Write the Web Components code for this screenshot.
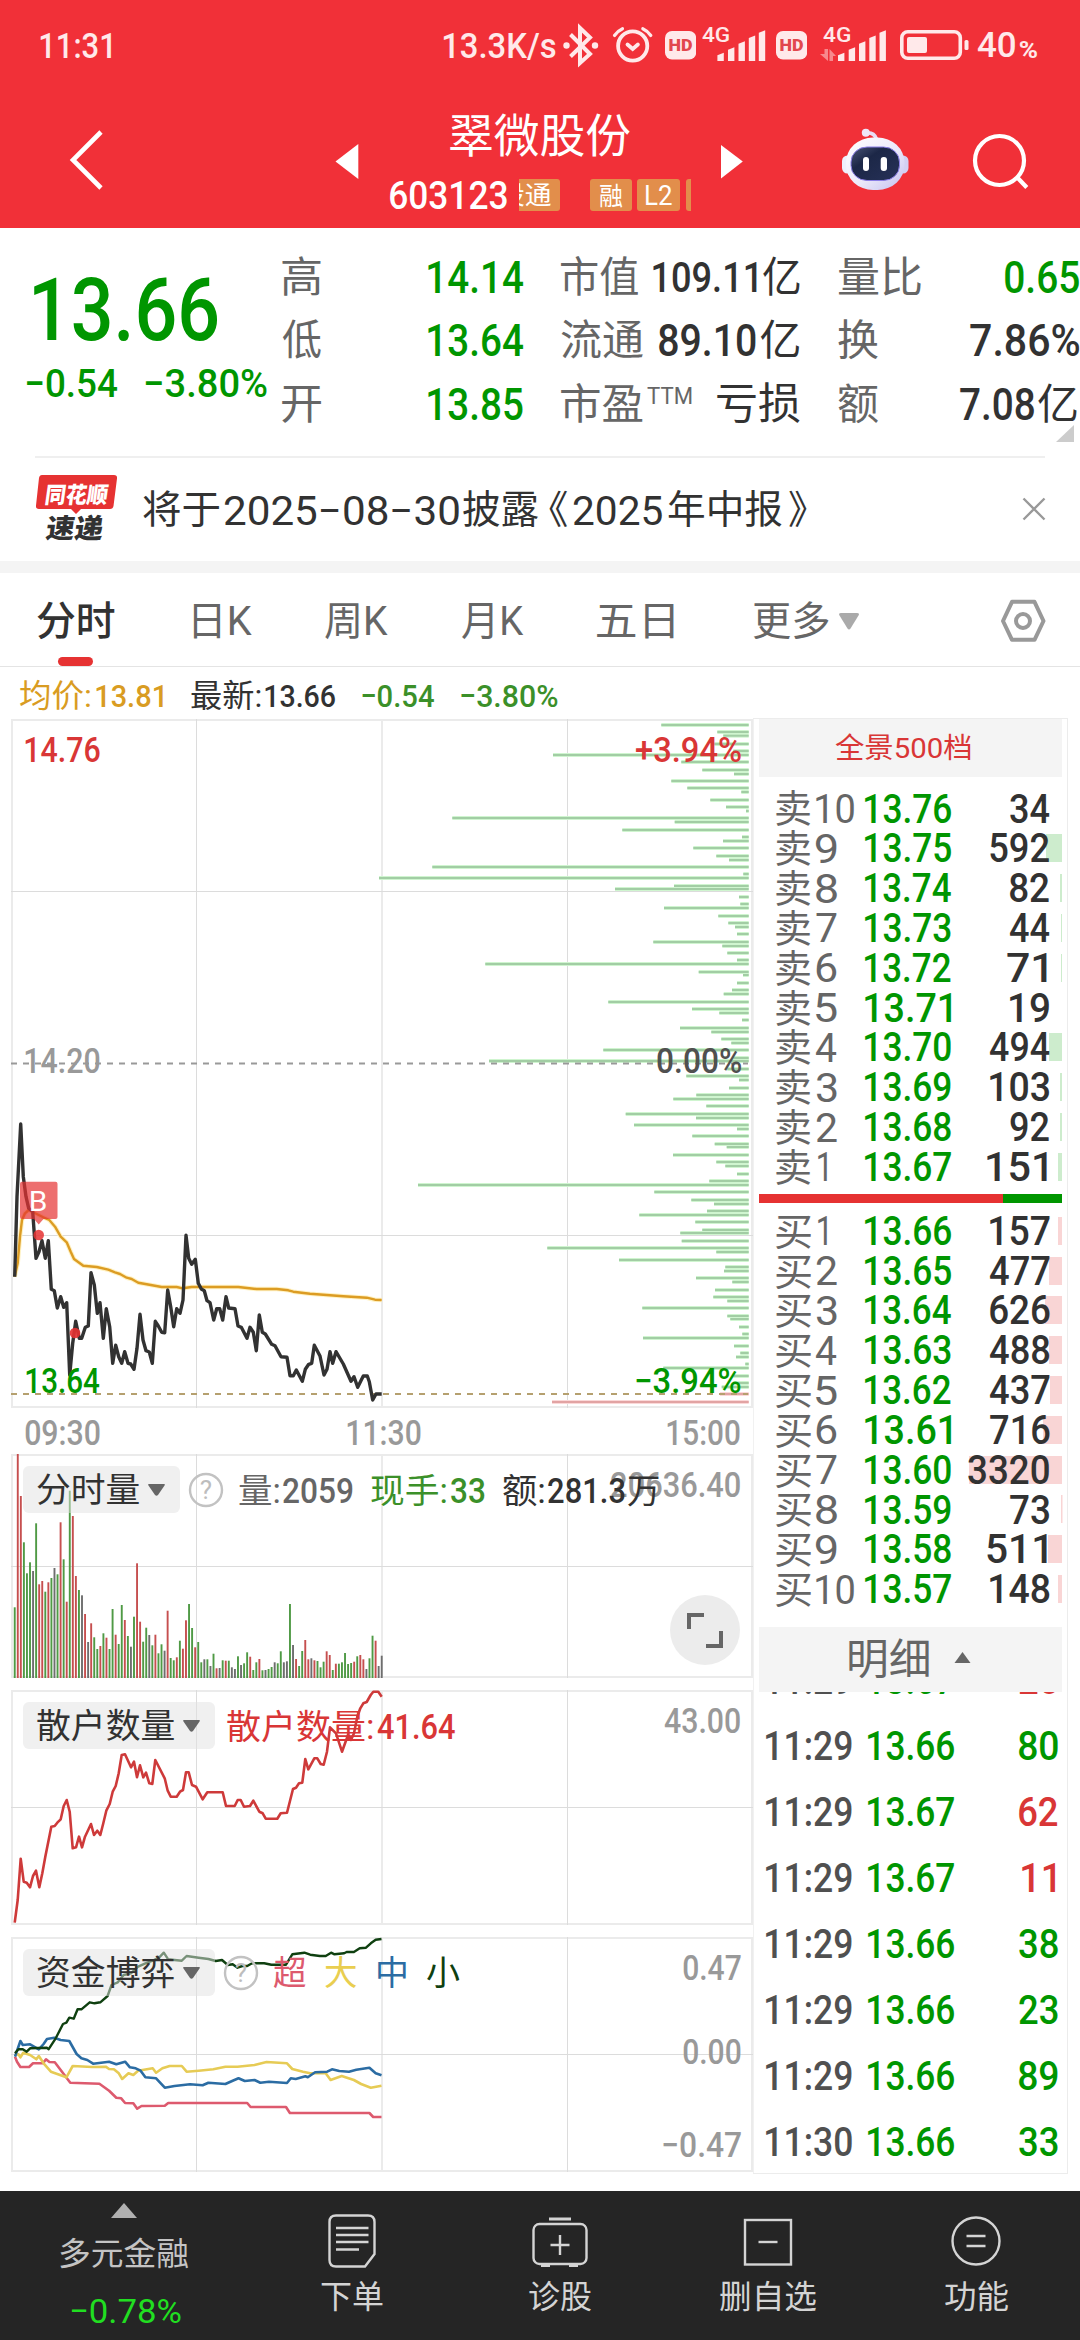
<!DOCTYPE html>
<html lang="zh-CN">
<head>
<meta charset="utf-8">
<title>翠微股份 603123</title>
<style>
html,body{margin:0;padding:0;background:#fff}
body{width:1080px;height:2340px;overflow:hidden;font-family:Roboto,"Noto Sans CJK SC",sans-serif}
</style>
</head>
<body>
<stock-app></stock-app>
<script>
const FONT = 'Roboto, "Noto Sans CJK SC", sans-serif';
const GREEN = '#009600', RED = '#d93636', DARK = '#323232', GRAY = '#666', LIGHT = '#999';
const ctx = document.createElement('canvas').getContext('2d');

/* Text run whose ink is fitted to an exact width. */
class FitText extends HTMLElement {
  connectedCallback() {
    if (this.shadowRoot) return;
    const w = +this.getAttribute('w'), s = +this.getAttribute('s'), b = this.getAttribute('b') || 400;
    const c = this.getAttribute('c') || 'inherit', y = (+this.getAttribute('y') || 0) + .8;
    ctx.font = `${b} ${s}px ${FONT}`;
    const m = ctx.measureText(this.textContent);
    const k = w / (m.actualBoundingBoxLeft + m.actualBoundingBoxRight);
    this.attachShadow({ mode: 'open' }).innerHTML = `<style>
      :host{display:block;width:${w}px;height:${s}px;flex:none}
      span{display:inline-block;vertical-align:top;white-space:pre;transform-origin:0 50%;font:${b} ${s}px/${s}px ${FONT};color:${c};
        transform:translate(${m.actualBoundingBoxLeft * k}px,${y}px) scaleX(${k})}
      </style><span><slot></slot></span>`;
  }
}
customElements.define('fit-text', FitText);

const F = (x, r, s, c, t, b = 400, y = 0) => ({ x, r, h: `<fit-text w="${r - x}" s="${s}" c="${c}" b="${b}" y="${y}">${t}</fit-text>` });
const I = (x, r, y, hh, inner) => ({ x, r, h: `<svg width="${r - x}" height="${hh}" viewBox="${x} ${y} ${r - x} ${hh}">${inner}</svg>` });
const row = (items, from = 0) => {
  let p = from;
  return items.map(i => { const m = i.x - p; p = i.r; return `<div class="i" style="margin-left:${m.toFixed(2)}px;width:${(i.r - i.x).toFixed(2)}px">${i.h}</div>`; }).join('');
};
const BASE = `:host{display:block}*{box-sizing:border-box}svg{display:block}.row{display:flex;align-items:center}.i{flex:none}`;
const define = (name, css, html) => customElements.define(name, class extends HTMLElement {
  connectedCallback() {
    if (this.shadowRoot) return;
    this.attachShadow({ mode: 'open' }).innerHTML = `<style>${BASE}${css}</style>${typeof html === 'function' ? html(this) : html}`;
  }
});

/* ---------- status bar ---------- */
const SW = '#ffe9ea';
const bars = xs => xs.map((x, i) => { const t = [53.3, 47.7, 41.7, 36, 30.7][i]; return `<path fill="${SW}" d="M${x} 61V${t + 2}L${x + 6.4} ${t - .5}V61z"/>`; }).join('');
const hd = x => I(x, x + 31.2, 0, 91, `<rect x="${x}" y="31" width="31.2" height="28.5" rx="7" fill="${SW}"/><text x="${x + 15.6}" y="51.2" text-anchor="middle" font-family="Roboto" font-weight="900" font-size="17" textLength="24" lengthAdjust="spacingAndGlyphs" fill="#e2474d">HD</text>`);
define('status-bar', `.row{height:91px}`, `<div class="row">${row([
  F(39.6, 111, 35.5, SW, '11:31', 500),
  F(443, 555.5, 35.5, SW, '13.3K/s', 500),
  I(562, 600, 0, 91, `<path d="M570.5 34.5L590 54L580 63V28L590 37.5L570.5 56.5" fill="none" stroke="${SW}" stroke-width="4"/><circle cx="566.5" cy="45.5" r="3.2" fill="${SW}"/><circle cx="595" cy="45.5" r="3.2" fill="${SW}"/>`),
  I(612, 654, 0, 91, `<g fill="none" stroke="${SW}" stroke-width="3.8" stroke-linecap="round"><circle cx="632.7" cy="46" r="14.6"/><path d="M627.5 44.5l5.2 4.5 5.2-4.5"/><path stroke-width="3.2" d="M614.5 35.5q3-4.500 8-6.800M650.800 35.500q-3-4.500-8-6.800"/></g>`),
  hd(664.7),
  F(702, 729.5, 20, SW, '4G', 500, -12),
  I(717, 766, 0, 91, bars([717.4, 728, 738.5, 748.8, 758.8])),
  hd(776.3),
  I(820, 836, 0, 91, `<g fill="#f7898d"><path d="M824.500 49h3.500v12l-8-7h4.500zM829.500 61v-12l6.500 7h-3v5z"/></g>`),
  F(822.8, 850.4, 20, SW, '4G', 500, -12),
  I(838, 887, 0, 91, bars([838, 848.700, 859, 869.300, 879.500])),
  I(899, 969, 0, 91, `<rect x="901.800" y="31.800" width="58.500" height="26.500" rx="6" fill="none" stroke="${SW}" stroke-width="3.600"/><rect x="907" y="37" width="20" height="16" rx="2" fill="${SW}"/><rect x="964.500" y="40" width="4" height="10" rx="1.500" fill="${SW}"/>`),
  F(977.5, 1016, 35.5, SW, '40', 500, -.5),
  F(1020, 1037, 23, SW, '%', 700, 4)
])}</div>`);

/* ---------- title header ---------- */
define('stock-header', `
  .row{height:137px;align-items:stretch}
  .mid{height:137px;padding-top:18px}
  .t{display:flex;height:52px;align-items:center}
  .c{display:flex;height:32px;align-items:center;margin-top:18px}
  .b{height:32px;background:#e28e4b;border-radius:3px;overflow:hidden;display:flex;align-items:center}
  .clipL{border-radius:0 3px 3px 0}.clipR{border-radius:3px 0 0 3px}`,
  `<div class="row">${row([
    I(66, 106, 91, 137, `<path d="M101 132L73 160L101 188" fill="none" stroke="#fff" stroke-width="4.600"/>`),
    I(335, 359, 91, 137, `<path d="M335.500 161.500L358.300 144V179z" fill="#fff"/>`),
    { x: 389, r: 692, h: `<div class="mid"><div class="t">${row([F(449.5, 629.6, 46, '#fff', '翠微股份')], 389)}</div>
      <div class="c">${row([
        F(389.6, 506.4, 38.5, '#fff', '603123', 500),
        { x: 519, r: 559.6, h: `<div class="b clipL">${row([F(498, 551, 25.5, '#fff', '股通')], 519)}</div>` },
        { x: 590, r: 631.6, h: `<div class="b">${row([F(600, 623, 25, '#fff', '融')], 590)}</div>` },
        { x: 637, r: 680.5, h: `<div class="b">${row([F(645.6, 672, 27, '#fff', 'L2')], 637)}</div>` },
        { x: 686, r: 691, h: `<div class="b clipR"></div>` }
      ], 389)}</div></div>` },
    I(720, 744, 91, 137, `<path d="M721 145V178.500L742.800 161.500z" fill="#fff"/>`),
    I(841, 909, 91, 137, `<defs><linearGradient id="a" x1="0" y1="0" x2="1" y2="1"><stop offset="0" stop-color="#fff"/><stop offset=".55" stop-color="#eceafa"/><stop offset="1" stop-color="#c3bff0"/></linearGradient><linearGradient id="v" x1="0" y1="0" x2="1" y2="1"><stop offset="0" stop-color="#4a5575"/><stop offset=".35" stop-color="#1c2747"/><stop offset="1" stop-color="#263158"/></linearGradient></defs>
      <path d="M866 133q8-1 10.500 6" fill="none" stroke="#e9dcf4" stroke-width="3.600"/><circle cx="865.800" cy="132.800" r="4" fill="#efe6f8"/>
      <rect x="842" y="155.500" width="12" height="18" rx="5.500" fill="#eef0fc"/><rect x="896.500" y="155.500" width="12" height="18" rx="5.500" fill="#d3d0f3"/>
      <rect x="846" y="137.500" width="58.500" height="52.500" rx="27" ry="25" fill="url(#a)"/>
      <rect x="851" y="147" width="48.500" height="33.500" rx="16" ry="15" fill="url(#v)" stroke="#8a7ee6" stroke-width="1"/>
      <rect x="863" y="157" width="6" height="14" rx="3" fill="#fff"/><rect x="880.700" y="157" width="6.300" height="14" rx="3" fill="#fff"/>`),
    I(970, 1030, 91, 137, `<g fill="none" stroke="#fff" stroke-width="4.200"><circle cx="999.500" cy="160.500" r="24.500"/><path d="M1016.800 177L1026.800 187.500"/></g>`)
  ])}</div>`);

/* ---------- quote ---------- */
define('quote-panel', `
  .q{display:flex;height:228px;border-bottom:0}
  .l{width:270px;flex:none;padding-top:38px}
  .big{display:flex;height:86px;align-items:center}
  .chg{display:flex;height:50px;align-items:center;margin-top:6px}
  .g{flex:1;padding-top:17px}
  .g .row{height:63.5px}
  .line{height:2px;margin-left:35px;width:1010px;background:#efefef}
  svg.cor{position:absolute;left:1056px;top:425px}`,
  `<div class="q"><div class="l"><div class="big">${row([F(33.8, 217, 87, GREEN, '13.66', 500)])}</div>
    <div class="chg">${row([F(27, 117.5, 39.5, GREEN, '−0.54', 500), F(146, 267, 39.5, GREEN, '−3.80%', 500)])}</div></div>
   <div class="g">
    <div class="row">${row([F(282, 321, 42, GRAY, '高'), F(428, 523, 44, GREEN, '14.14', 500), F(561, 638.5, 42, GRAY, '市值'), F(653, 757, 43, DARK, '109.11', 500), F(763, 800, 42, DARK, '亿'), F(838, 921, 42, GRAY, '量比'), F(1004.5, 1079, 44, GREEN, '0.65', 500)], 270)}</div>
    <div class="row">${row([F(282, 321, 42, GRAY, '低'), F(428, 523, 44, GREEN, '13.64', 500), F(561, 643, 42, GRAY, '流通'), F(658.5, 755, 44, DARK, '89.10', 500), F(760.5, 799.5, 42, DARK, '亿'), F(838, 878, 42, GRAY, '换'), F(970, 1079.5, 44, DARK, '7.86%', 500)], 270)}</div>
    <div class="row">${row([F(282, 321, 42, GRAY, '开'), F(428, 523, 44, GREEN, '13.85', 500), F(561, 643, 42, GRAY, '市盈'), F(646.5, 691.5, 23, GRAY, 'TTM', 400, -8), F(717, 800, 43, DARK, '亏损'), F(838, 878, 42, GRAY, '额'), F(959.5, 1033.5, 44, DARK, '7.08', 500), F(1038, 1077, 42, DARK, '亿')], 270)}</div>
   </div></div><svg class="cor" width="18" height="17"><path d="M18 0V17H0z" fill="#ccc"/></svg><div class="line"></div>`);

define('news-strip', `.row{height:103px}.band{height:12px;background:#f4f4f4}`, `<div class="row">${row([
  I(34, 119, 458, 103, `<path d="M42 475H114q3.500 0 3 3.500L113.500 506q-.5 3-3.500 3H81l-5 5-5-5H39q-3.500 0-3-3.500L39 478q.5-3 3-3z" fill="#e63232"/>
    <text transform="translate(44 502.500) skewX(-8)" font-family="Noto Sans CJK SC" font-weight="900" font-size="22.500" textLength="63" lengthAdjust="spacingAndGlyphs" fill="#fff">同花顺</text>
    <text transform="translate(45 537.500) skewX(-8)" font-family="Noto Sans CJK SC" font-weight="900" font-size="27" textLength="57" lengthAdjust="spacingAndGlyphs" fill="#323232">速递</text>`),
  F(143, 219, 39, DARK, '将于'), F(223.5, 458, 41.5, DARK, '2025−08−30'), F(463, 538, 39, DARK, '披露'), F(548.6, 567, 39, DARK, '《'), F(573, 662, 41.5, DARK, '2025'), F(668, 782, 39, DARK, '年中报'), F(789, 807, 39, DARK, '》'),
  I(1022, 1046, 458, 103, `<path d="M1023.500 498.500L1044.500 519.500M1044.500 498.500L1023.500 519.500" stroke="#999" stroke-width="2.400"/>`)
])}</div><div class="band"></div>`);

define('chart-tabs', `.row{height:93px;padding-top:2px}.u{height:0}.u i{display:block;position:relative;top:-9px;margin-left:58px;width:35px;height:9px;border-radius:5px;background:#e63232}.line{height:1px;background:#e4e4e4}`,
  `<div class="row">${row([
    F(37, 114.700, 40, DARK, '分时', 500), F(194, 252.5, 40, GRAY, '日K'), F(325, 388.5, 40, GRAY, '周K'), F(462, 524, 40, GRAY, '月K'), F(597, 674, 40, GRAY, '五日'), F(753, 828.600, 40, GRAY, '更多'),
    I(838, 860, 573, 91, `<path d="M841 611H857q3 0 1.500 2.500L850.500 626.500q-1.500 2-3 0L839.500 613.500q-1.500-2.500 1.500-2.500z" fill="#aaa"/>`),
    I(999, 1047, 574, 91, `<g fill="none" stroke="#999" stroke-width="4"><path stroke-linejoin="round" d="M1012 600.800H1034.500L1043.500 620L1034.500 638.800H1012L1003 620z"/><circle cx="1023" cy="620" r="7"/></g>`)
  ])}</div><div class="u"><i></i></div><div class="line"></div>`);

define('info-line', `.row{height:52px;padding-top:3px}`, `<div class="row">${row([
  F(20, 90, 32, '#d99c22', '均价:'), F(95.5, 162, 32, '#d99c22', '13.81', 500), F(190.5, 260, 32, DARK, '最新:'), F(265, 335, 32, DARK, '13.66', 500), F(361.7, 434, 32, '#3b9029', '−0.54', 500), F(461, 558, 32, '#3b9029', '−3.80%', 500)])}</div>`);

/* ---------- charts ---------- */
const grid = (top, h, hs) => {
  const b = top + h;
  return `<g shape-rendering="crispEdges"><path d="M12 ${top}V${b}M382 ${top}V${b}M752 ${top}V${b}M11 ${top + 1}H753M11 ${b - 1}H753" stroke="#ebebeb" stroke-width="2" fill="none"/>
  <path d="M196.500 ${top}V${b}M567.500 ${top}V${b}${hs.map(y => `M11 ${y}.5H753`).join('')}" stroke="#dcdcdc" stroke-width="1" fill="none"/></g>`;
};
const pts = (s, kx, y0) => s.trim().split(/\s+/).map(p => { const [x, y] = p.split(',').map(Number); return (x / kx).toFixed(1) + ',' + (y0 + y / 3).toFixed(1); }).join(' ');
const line = (s, kx, y0, c, w) => `<polyline points="${pts(s, kx, y0)}" fill="none" stroke="${c}" stroke-width="${w}" stroke-linejoin="round"/>`;
const frame = (top, h, inner) => `<svg width="753" height="${h}" viewBox="0 ${top} 753 ${h}">${inner}</svg>`;
const over = (top, y, items) => `<div class="ov" style="top:${y - top - 24}px">${row(items)}</div>`;
const CH = `:host{position:relative;width:753px}.ov{position:absolute;left:0;height:48px;width:753px;display:flex;align-items:center}
  .pill{position:absolute;left:23px;top:12px;height:47px;border-radius:6px;background:rgba(226,226,226,.5);display:flex;align-items:center}`;
const pill = (w, text, tr) => `<div class="pill" style="width:${w}px">${row([F(36.7, tr, 34.5, DARK, text), I(tr + 10, tr + 27, 0, 20, `<path d="M${tr + 11} 4H${tr + 26}q1.500 0 .5 1.500L${tr + 20} 15q-1.500 1.500-3 0L${tr + 10.5} 5.500q-1-1.500.5-1.500z" fill="#666"/>`)], 23)}</div>`;
const help = (cx) => I(cx - 18, cx + 18, 0, 36, `<circle cx="${cx}" cy="18" r="16" fill="none" stroke="#c2c2c2" stroke-width="2.400"/><text x="${cx}" y="27" text-anchor="middle" font-family="Roboto" font-size="26" fill="#bdbdbd">?</text>`);

const D1 = [[844,75],[1012,96],[1030,107],[1003,132],[1060,153],[519,165],[904,186],[967,210],[1062,222],[874,243],[922,264],[1084,276],[991,300],[1038,321],[1098,333],[217,354],[884,366],[727,390],[1086,411],[1029,423],[940,444],[1009,468],[1047,480],[157,501],[1090,522],[-3,534],[882,558],[705,567],[1077,591],[1081,612],[852,624],[1015,648],[1045,669],[1065,681],[1071,702],[820,726],[1027,738],[1042,759],[1071,780],[316,792],[956,816],[1089,825],[1071,849],[1056,870],[1031,882],[685,906],[936,927],[1018,939],[1086,960],[900,984],[994,996],[1024,1017],[1054,1029],[670,1050],[1060,1074],[327,1083],[1042,1107],[919,1128],[1077,1140],[1047,1164],[949,1185],[880,1197],[979,1218],[737,1242],[948,1254]];
const D2 = [[762,135],[1071,147],[937,168],[1004,192],[1040,201],[879,225],[1009,246],[1036,258],[1071,282],[988,303],[114,315],[823,336],[934,360],[1002,372],[981,393],[778,405],[946,426],[967,450],[901,459],[905,483],[502,504],[1009,516],[717,540],[1036,561],[1032,573],[948,594],[1057,606],[1005,630],[1000,651],[1042,663],[787,684],[1042,708],[1051,717],[1077,741],[1087,762],[789,774],[1062,798],[1081,819],[1068,831],[1096,852],[850,864],[1060,888],[1060,909],[1025,921]];
const D3 = [[1020,942],[516,966]];
const depth = (d, y0, a, b) => d.map(([x, y]) => { const X = (380 + x / 3).toFixed(1), w = (748.7 - X).toFixed(1), Y = y0 + y / 3; return `<rect x="${X}" y="${(Y - 2).toFixed(1)}" width="${w}" height="4" fill="${a}"/><rect x="${X}" y="${(Y - 1).toFixed(1)}" width="${w}" height="2" fill="${b}"/>`; }).join('');

const PRICE = `44,590 51,350 62,132 70,290 78,350 86,385 98,395 108,535 117,515 126,482 136,535 145,482 154,628 163,632 172,684 182,650 191,682 200,668 209,885 218,790 227,724 238,775 245,775 256,742 265,738 273,578 283,615 292,700 300,668 310,775 319,686 329,740 338,850 347,796 356,830 365,850 374,815 384,850 392,852 402,868 411,805 420,703 429,780 438,812 448,816 457,850 466,724 475,738 485,757 494,758 503,630 512,680 521,740 530,686 540,700 549,660 558,466 566,535 575,553 586,538 595,610 604,627 613,632 621,662 630,668 641,720 650,686 659,686 668,720 678,650 686,684 705,686 714,738 724,742 741,775 750,742 760,757 769,812 778,705 787,757 796,762 815,793 825,797 843,830 861,832 870,887 880,887 889,870 907,904 916,868 926,853 935,850 943,796 960,828 972,885 981,868 990,815 998,850 1008,815 1030,852 1053,904 1062,890 1073,922 1090,888 1102,888 1108,905 1118,960 1128,942 1145,942`;
const AVG = `44,590 53,550 60,470 66,420 75,400 86,390 110,402 130,412 148,420 165,440 182,470 200,487 212,515 222,537 250,557 290,561 325,569 345,577 360,582 380,593 395,597 415,608 440,613 485,621 530,621 548,625 575,621 715,621 770,627 830,627 865,631 880,635 930,641 980,645 1030,649 1100,653 1125,659 1145,660`;

define('minute-chart', CH + `:host{height:735px}.t{height:46px;display:flex;align-items:center;padding-top:3px}`, frame(719, 689,
  grid(719, 689, [891, 1235]) + depth(D1, 700, '#cff5cf', '#a2cda4') + depth(D2, 1080, '#cff5cf', '#a2cda4') + depth(D3, 1080, '#fbd9d9', '#e2a3a3') +
  `<path d="M11 1063.500H748" stroke="#999" stroke-width="2" stroke-dasharray="6 6" fill="none"/><path d="M11 1394H748" stroke="#b5a06f" stroke-width="2" stroke-dasharray="6 6" fill="none"/>` +
  line(AVG, 3, 1080, '#fff2c4', 4.5) + line(AVG, 3, 1080, '#dc9c23', 2.4) + line(PRICE, 3, 1080, '#323232', 3.4) +
  `<g fill="#e63232"><path fill-opacity=".7" d="M22 1181.700H55.500q2 0 2 2V1217q0 2-2 2H43.500L38.700 1224.500L34 1219H22q-2 0-2-2V1183.700q0-2 2-2z"/><circle cx="38.700" cy="1235" r="5.300" fill-opacity=".85"/><circle cx="75" cy="1333" r="5.300" fill-opacity=".9"/></g>`) +
  over(719, 749, [F(25, 100, 35, RED, '14.76', 500), F(635.7, 741, 35, RED, '+3.94%', 500)]) +
  over(719, 1060, [F(25, 100, 35, LIGHT, '14.20', 500), F(656.5, 741, 35, '#505050', '0.00%', 500)]) +
  over(719, 1201.5, [F(31, 46.5, 27, '#fff', 'B')]) +
  over(719, 1380, [F(26, 100, 35, GREEN, '13.64', 500), F(636, 741, 35, GREEN, '−3.94%', 500)]) +
  `<div class="t">${row([F(25, 100, 35.5, LIGHT, '09:30', 500), F(346.7, 420.500, 35.5, LIGHT, '11:30', 500), F(666.7, 739.5, 35.5, LIGHT, '15:00', 500)])}</div>`);

const VOL = `502g 42r 168r 307g 400g 367g 393k 250g 433r 423r 455g 427r 414g 384k 403g 247r 358g 485r 152g 228r 408r 450g 466k 522r 606k 550r 592g 627g 618r 580g 593r 627g 507g 584r 612g 495g 540r 588g 620k 530g 370r 545r 605g 563g 585k 616g 584r 640g 613g 632k 512r 654g 661g 652r 602g 626r 541r 492g 564g 622r 606g 667g 658k 658g 678k 641g 685r 684k 661g 662r 662g 682k 687k 649g 675k 670g 637g 650r 690g 667g 657r 691g 690k 687g 681g 667k 670g 634g 667k 664k 492g 615k 657r 678g 633g 600r 658r 655k 661r 663g 682g 665g 634r 645r 690g 671r 671g 667g 639g 672g 669g 665r 649g 645r 658r 687k 655g 587g 602r 678k 647k`;
const VC = { g: '#4f9a45', r: '#c64f4f', k: '#6e6e6e' };
define('volume-chart', CH + `:host{height:236px}`, frame(1454, 224, grid(1454, 224, [1566]) +
  VOL.split(' ').map((v, i) => { const t = parseInt(v), X = (44 + 9.175 * i) / 3; return `<rect x="${(X - .9).toFixed(2)}" y="${(1440 + t / 3).toFixed(1)}" width="1.9" height="${(238 - t / 3).toFixed(1)}" fill="${VC[v.slice(-1)]}"/>`; }).join('') +
  `<circle cx="705" cy="1630" r="35" fill="#ececec"/><path d="M689 1629V1615H704M721 1631V1646H706" fill="none" stroke="#666" stroke-width="4"/>`) +
  over(1454, 1484, [F(611, 740.5, 35, LIGHT, '20636.40', 500)]) +
  pill(157, '分时量', 138.5) +
  over(1454, 1490, [help(205.7), F(239, 279.5, 34.5, GRAY, '量:'), F(283.5, 353, 34.5, GRAY, '2059', 500), F(371.5, 447, 34.5, '#3b9029', '现手:'), F(451.5, 485, 34.5, '#3b9029', '33', 500), F(503, 544.5, 34.5, DARK, '额:'), F(548.5, 625, 34.5, DARK, '281.3', 500), F(628, 659, 34.5, DARK, '万')]));

const RETAIL = `44,1448 53,1380 62,1256 71,1325 80,1328 90,1342 99,1308 108,1292 118,1342 127,1300 136,1250 154,1160 164,1158 172,1148 182,1138 191,1098 200,1080 209,1115 218,1225 228,1222 237,1190 246,1222 255,1190 273,1152 282,1185 292,1172 301,1185 310,1150 319,1112 329,1092 338,1055 347,1038 356,1000 365,945 375,943 393,982 402,965 411,1012 420,976 430,1012 438,998 448,1030 457,1032 466,960 494,1015 503,1052 512,1070 530,1070 540,1055 549,1050 558,997 566,997 576,1035 588,1040 608,1078 622,1057 668,1057 678,1098 704,1098 713,1080 722,1080 732,1100 750,1098 760,1082 778,1115 788,1120 797,1136 832,1136 842,1120 861,1118 879,1047 888,1043 897,1030 907,1028 916,957 925,988 943,955 952,955 962,972 971,974 981,935 990,862 1008,880 1026,935 1044,885 1053,900 1062,880 1072,830 1081,805 1090,790 1100,786 1112,765 1120,755 1135,755 1145,770`;
define('retail-chart', CH + `:host{height:247px}`, frame(1690, 235, grid(1690, 235, [1807]) + line(RETAIL, 3, 1440, '#ce3a3a', 2.6)) +
  pill(192, '散户数量', 173.5) +
  over(1690, 1726, [F(227, 373, 34.5, RED, '散户数量:'), F(376.7, 454.6, 34.5, RED, '41.64', 500)]) +
  over(1690, 1720.5, [F(664, 740.5, 35, LIGHT, '43.00', 500)]));

const SMALL = `31,400 38,388 47,388 55,395 62,385 97,383 100,388 115,355 130,312 137,308 143,293 152,296 160,268 168,268 185,247 195,250 207,247 222,228 230,195 243,187 255,165 270,160 285,140 300,130 315,122 330,110 338,98 347,118 360,120 375,122 385,108 410,113 430,117 445,123 458,120 470,135 480,133 490,143 500,138 510,138 520,130 545,130 560,134 590,134 603,103 628,98 640,104 660,108 672,108 683,98 690,103 710,100 715,96 730,96 742,85 755,83 765,70 775,59 787,57`;
const MIDL = `31,410 42,363 47,375 62,373 80,388 90,372 97,357 112,353 125,360 143,363 158,402 168,415 180,420 192,431 225,425 240,433 258,425 268,442 280,445 290,452 300,472 322,475 340,503 360,498 392,493 418,496 430,488 465,492 480,482 492,475 505,483 525,480 537,488 555,485 592,489 600,475 610,477 630,469 635,472 650,457 675,455 685,448 700,453 720,455 735,449 762,443 775,460 787,466`;
const BIG = `31,405 38,403 42,412 48,398 62,405 75,418 80,408 90,430 105,455 137,472 150,438 190,441 218,440 225,447 235,448 245,460 252,477 265,460 275,465 285,452 315,445 322,458 335,445 350,438 375,438 385,455 410,452 440,448 465,440 490,440 525,435 550,426 592,430 603,447 625,455 640,460 672,460 682,480 705,468 730,480 745,492 765,503 787,497`;
const SUPER = `31,410 35,425 42,441 60,441 68,430 88,430 95,418 102,426 113,427 145,488 205,491 225,512 240,533 250,535 258,549 275,550 283,566 292,558 340,557 347,549 510,549 517,561 590,561 598,579 762,579 770,591 787,591`;
define('fund-chart', CH + `:host{height:254px}`, frame(1937, 235, grid(1937, 235, [2054]) +
  line(SUPER, 2.063, 1920, '#dd5a6e', 2.6) + line(BIG, 2.063, 1920, '#e6cb55', 2.6) + line(MIDL, 2.063, 1920, '#2b6ca3', 2.6) + line(SMALL, 2.063, 1920, '#0f4010', 2.4)) +
  pill(192, '资金博弈', 173.5) +
  over(1937, 1972.5, [help(240.5), F(273, 306, 34.5, '#dd5a6e', '超'), F(325, 357, 34.5, '#e9ce50', '大'), F(377.5, 406, 34.5, '#2b6ca3', '中'), F(426.5, 459, 34.5, '#0f4010', '小')]) +
  over(1937, 1967.5, [F(683, 741, 35, LIGHT, '0.47', 500)]) +
  over(1937, 2051, [F(683, 741, 35, LIGHT, '0.00', 500)]) +
  over(1937, 2144, [F(662.6, 741, 35, LIGHT, '−0.47', 500)]));

/* ---------- order book ---------- */
const orders = (side, rows, fill) => rows.map(([n, p, q, bx]) => {
  const w = { 2: 39.5, 3: 59.5, 4: 81 }[String(q).length], r = String(q).endsWith('1') ? 1046.5 : 1049;
  const bg = bx ? `background:linear-gradient(${fill},${fill}) ${bx - 753}px 50%/${1062 - bx}px 28px no-repeat` : '';
  return `<div class="o" style="${bg}">${row([F(776, 811, 38, GRAY, side), F(n == 1 ? 818 : 816, n == 10 ? 854 : n == 1 ? 827 : 837, 41, GRAY, n), F(865, 951, 39.8, GREEN, p, 500), F(r - w, r, 39.8, DARK, q, 500)], 753)}</div>`;
}).join('');
define('order-book', `
  .hd{margin-left:6px;width:303px;height:58px;background:#f4f4f4;display:flex;align-items:center}
  .o{height:39.83px;display:flex;align-items:center}
  .s{padding-top:11.500px}.bar{display:flex;height:9px;margin:7.500px 0 7.500px 6px;width:303px;background:#009600}.bar i{width:244px;background:#e63232}
  .d{margin:17.500px 0 0 6px;width:303px;height:65px;background:#f4f4f4;display:flex;align-items:center}`,
  `<div class="hd">${row([F(835, 971, 28.5, RED, '全景500档')], 759)}</div>
  <div class="s">${orders('卖', [[10, '13.76', 34], [9, '13.75', 592, 1046], [8, '13.74', 82, 1060], [7, '13.73', 44, 1061], [6, '13.72', 71, 1061], [5, '13.71', 19], [4, '13.70', 494, 1049], [3, '13.69', 103, 1060], [2, '13.68', 92, 1060], [1, '13.67', 151, 1058]], '#cdeccd')}</div>
  <div class="bar"><i></i></div>
  <div>${orders('买', [[1, '13.66', 157, 1058], [2, '13.65', 477, 1049], [3, '13.64', 626, 1045], [4, '13.63', 488, 1049], [5, '13.62', 437, 1050], [6, '13.61', 716, 1043], [7, '13.60', 3320, 969], [8, '13.59', 73, 1060.5], [9, '13.58', 511, 1048], [10, '13.57', 148, 1058]], '#f9d5d5')}</div>
  <div class="d">${row([F(849, 929.5, 42, GRAY, '明细'), I(953, 972, 0, 22, `<path d="M954.500 15L962.500 4L970.500 15z" fill="#666"/>`)], 759)}</div>`);

define('trade-ticks', `:host{height:483px;overflow:hidden}.w{margin-top:-45px}.t{height:66.1px;display:flex;align-items:center}`,
  `<div class="w">${[['11:29', '13.67', '20', 1], ['11:29', '13.66', '80'], ['11:29', '13.67', '62', 1], ['11:29', '13.67', '11', 1], ['11:29', '13.66', '38'], ['11:29', '13.66', '23'], ['11:29', '13.66', '89'], ['11:30', '13.66', '33']]
    .map(([t, p, q, r]) => `<div class="t">${row([F(765.6, 851.5, 39.8, '#505050', t, 500), F(868, 954, 39.8, GREEN, p, 500), F(q == '11' ? 1022 : 1019, q == '11' ? 1055 : 1058, 39.8, r ? RED : GREEN, q, 500)], 753)}</div>`).join('')}</div>`);

/* ---------- bottom navigation ---------- */
const NC = '#d4d4d4';
define('nav-item', `:host{width:208px;height:149px}.c{display:flex;flex-direction:column;align-items:center;padding-top:21px}fit-text{margin-top:10px}`,
  el => `<div class="c"><svg width="60" height="58" viewBox="-30 -29 60 58" fill="none" stroke="${NC}" stroke-width="2.400">${{
    order: '<path d="M-16-25.500H16q6.500 0 6.500 6.500V13L13 25.500H-16q-6.500 0-6.500-6.500V-19q0-6.500 6.500-6.500z"/><path d="M-16-13H16.500M-16-6H16.500M-16 1H16.500M-16 8.500H7"/>',
    diag: '<rect x="-26.500" y="-17" width="53" height="40" rx="6"/><path d="M-9.500 4H9.500M0-6V14"/><path stroke-width="3" d="M-11-22H11M-19 24.500h9M9 24.500h9"/>',
    del: '<rect x="-23" y="-21" width="46" height="44.500"/><path d="M-9.500 1H9.500"/>',
    fn: '<circle cx="0" cy="0" r="23.500"/><path d="M-9.500-5H9.500M-9.500 5H9.500"/>' }[el.getAttribute('icon')]}</svg>
    <fit-text w="${el.getAttribute('w')}" s="32" c="${NC}">${el.getAttribute('label')}</fit-text></div>`);
define('bottom-nav', `.n{display:flex;height:149px;background:#252525}.f{width:248px;flex:none;display:flex;flex-direction:column}.f svg{margin:12px 0 0 111px}.r{display:flex;align-items:center}`,
  `<div class="n"><div class="f"><svg width="26" height="15"><path d="M13 0L26 15H0z" fill="#b0b0b0"/></svg>
   <div class="r" style="height:40px;margin-top:15px">${row([F(60, 188, 32, '#c4c4c4', '多元金融')])}</div>
   <div class="r" style="height:40px;margin-top:17px">${row([F(71, 181, 34, '#21de21', '−0.78%')])}</div></div>
   <nav-item icon="order" label="下单" w="62"></nav-item><nav-item icon="diag" label="诊股" w="62"></nav-item><nav-item icon="del" label="删自选" w="96"></nav-item><nav-item icon="fn" label="功能" w="63"></nav-item></div>`);

define('stock-app', `:host{width:1080px;height:2340px;overflow:hidden;background:#fff}
  .top{background:#f13038}.main{display:flex;height:1524px}.l{width:753px;flex:none}
  .r{margin-top:51px;width:315px;height:1456px;flex:none;border:1px solid #ececec;border-left:0;box-shadow:inset 1px 0 #f1f1f1}`,
  `<div class="top"><status-bar></status-bar><stock-header></stock-header></div>
  <quote-panel></quote-panel><news-strip></news-strip><chart-tabs></chart-tabs>
  <div class="main"><div class="l"><info-line></info-line><minute-chart></minute-chart><volume-chart></volume-chart><retail-chart></retail-chart><fund-chart></fund-chart></div>
  <div class="r"><order-book></order-book><trade-ticks></trade-ticks></div></div>
  <bottom-nav></bottom-nav>`);
</script>
</body>
</html>
